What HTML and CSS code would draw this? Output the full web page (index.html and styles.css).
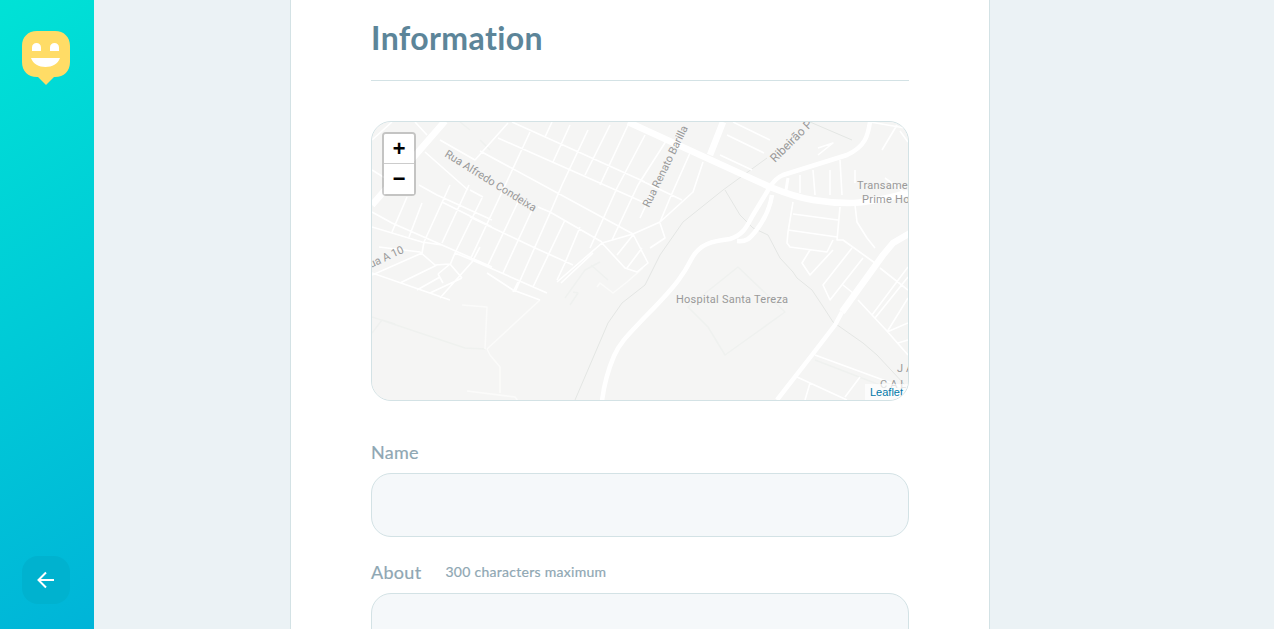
FILE: index.html
```html
<!DOCTYPE html>
<html lang="en">
<head>
<meta charset="utf-8">
<title>Create orphanage</title>
<link rel="stylesheet" href="styles.css">
</head>
<body>
<div class="app">
  <aside class="sidebar">
    <svg class="logo" width="48" height="54" viewBox="0 0 48 54">
      <path class="logo-body" d="M15 0H33C42 0 48 6 48 15V31C48 40 42 46 33 46H32L24 54L16 46H15C6 46 0 40 0 31V15C0 6 6 0 15 0Z"/>
      <path class="logo-face" d="M10 20V16.500C10 13.500 12 12 14.500 12C17 12 19 13.500 19 16.500V20ZM28 20V16.500C28 13.500 30 12 32.500 12C35 12 37 13.500 37 16.500V20ZM9 27H38C36 33 30 36 23.500 36C17 36 11 33 9 27Z"/>
    </svg>
    <button class="back" type="button" aria-label="Back">
      <svg width="24" height="24" viewBox="0 0 24 24"><path d="M20 12H5M12 4.500L4.500 12L12 19.500"/></svg>
    </button>
  </aside>
  <main class="main">
    <form class="card">
      <h1 class="title">Information</h1>
      <div class="map">
        <svg class="tiles" viewBox="371 121 538 280" width="538" height="280">
          <rect class="land" x="371" y="121" width="538" height="280"/>
          <path class="boundary" d="M767 158L723 190L683 222L660 255L645 285L622 303L608 323L575 400M725 190L740 215L753 228L768 235L780 258L793 272L797 278L812 290L822 305L833 322L863 343L877 355L905 385M810 122L852 140"/>
          <path class="faint" d="M738 267L785 312L725 355L708 327L688 307ZM372 317L465 348L485 349M372 333L382 320L395 324M565 298L585 270L600 262M570 305L578 293L573 292M591 265L608 280M815 360L880 385M460 122L470 130M480 140L490 150"/>
          <path class="path" d="M485 349L487 307L462 305M487 349L490 355L500 367L500 393M467 391L515 397L518 401M487 349L540 300M597 287L600 283L613 293L627 282L643 268"/>
          <path class="street" d="M512 122L645 182M498 138L645 203M480 151L633 234M470 190L483 197M538 207L550 212L602 242M470 217L533 247L573 265M419 185L437 195L492 220M442 202L492 227M372 212L392 223L442 245L492 267M372 227L422 242L442 245M425 152L468 190M475 160L508 123M440 140L475 160M415 122L427 135M372 140L392 122M372 170L385 178
          M530 132L502 192L470 260M552 122L545 137M570 125L553 162M588 130L562 185L550 213L515 292M610 125L585 175M628 125L600 185M645 135L617 188L590 248M668 138L638 185L612 240M518 202L488 265M533 208L503 273M565 220L533 287M580 227L565 263L557 280M407 197L392 232M422 203L409 237M450 185L424 242L422 253M469 185L442 243M482 198L455 253L450 265
          M557 282L602 243L633 234L660 222M561 283L593 253M602 243L625 268L637 272L648 263L633 234M617 255L633 235M627 268L642 248M640 218L652 192M640 180L682 200M690 153L670 198L660 222M703 162L693 192L660 222M660 223L665 238L650 248
          M379 247L420 252L435 265L450 264L462 278M440 298L472 262L480 247M372 275L422 253M372 273L450 300M400 283L437 265M417 290L440 277M430 293L462 278M438 274L450 264M438 274L443 283M455 253L472 260L547 293M487 273L513 290L540 300M518 282L513 292
          M727 135L764 153M720 155L752 170M733 122L770 140M793 202L788 232L787 243L790 247L827 252L833 240M793 214L838 220M788 230L837 237M840 207L837 240L843 240L875 263M810 250L802 263L810 275L833 250M852 248L823 285L830 300L863 258M843 285L853 293M855 205L857 222L867 238L875 248M830 170L830 195M813 170L815 195M800 175L800 193M840 160L842 195M855 170L855 183M818 148L833 143L818 155M897 125L882 150M900 131L908 142M870 122L905 128M885 178L908 195
          M880 268L908 290M858 300L886 330L908 355M872 315L908 267M875 318L908 277M887 332L908 298M887 332L908 323M898 343L908 340M815 355L905 388M797 377L847 400M845 397L860 377M810 383L805 400"/>
          <path class="road-m" d="M870 122C868 135 866 146 847 155L783 175C776 178 773 182 770 187L753 215C747 225 745 234 730 239C712 241 700 244 692 258C685 272 678 284 645 317C630 333 620 342 614 356C608 370 604 385 602 401M772 195C770 208 763 222 755 232C750 238 747 242 737 241M842 312L835 325L812 355L777 400"/>
          <path class="road-l" d="M628 122L770 187C785 193 800 198 813 200C825 202 835 203 850 203C870 203 890 197 908 193M723 122L710 155M445 121L372 205M910 233L893 243L883 255L842 312"/>
          <path class="road-s" d="M788 178L786 190"/>
          <text class="label" transform="translate(444 156) rotate(32)">Rua Alfredo Condeixa</text>
          <text class="label" transform="translate(649 208) rotate(-64)">Rua Renato Barilla</text>
          <text class="label big" transform="translate(775 163) rotate(-45)">Ribeirão P</text>
          <text class="label" transform="translate(371 268) rotate(-25)">ua A 10</text>
          <text class="label spaced" x="857" y="189">Transamerica</text>
          <text class="label spaced" x="862" y="203">Prime Hotel</text>
          <text class="label spaced" x="676" y="303">Hospital Santa Tereza</text>
          <text class="label wide" x="897" y="372">JA</text>
          <text class="label wide" x="880" y="388">CAL</text>
        </svg>
        <div class="zoom">
          <a class="zoom-btn zoom-in">+</a>
          <a class="zoom-btn">−</a>
        </div>
        <div class="attribution"><a>Leaflet</a></div>
      </div>
      <div class="field">
        <label class="field-label">Name</label>
        <input class="input" type="text">
      </div>
      <div class="field">
        <label class="field-label field-row"><span>About</span> <span class="hint">300 characters maximum</span></label>
        <textarea class="input textarea"></textarea>
      </div>
    </form>
  </main>
</div>
</body>
</html>
```
FILE: styles.css
```css
* { box-sizing: border-box; }
html, body { margin: 0; height: 100%; overflow: hidden; }
body { background: #ebf2f5; font-family: "Lato", "Noto Sans", sans-serif; color: #5c8599; font-variant-ligatures: none; }
.app { position: relative; height: 100vh; }
.sidebar {
  position: absolute; left: 0; top: 0; bottom: 0;
  width: 94px; display: flex; flex-direction: column; justify-content: space-between; align-items: flex-start;
  padding: 31px 0 25px 22px;
  background: linear-gradient(329.54deg, #00b4d8 0%, #00e2d6 100%);
}
.logo-body { fill: #ffdc66; }
.logo-face { fill: #fff; }
.back {
  width: 48px; height: 48px; border: 0; padding: 0; border-radius: 16px; background: #00b2cf;
  display: flex; align-items: center; justify-content: center;
}
.back path { fill: none; stroke: #fff; stroke-width: 2; }
.main { display: flex; justify-content: center; padding-left: 6px; }
.card {
  width: 700px; flex: none; height: 900px; padding: 0 80px; background: #fff;
  border: 1px solid #d3e2e5; border-width: 0 1px;
}
.title {
  margin: 0 0 40px; padding: 15px 0 20px; height: 81px; line-height: 46px; font-size: 32px; font-weight: 700;
  letter-spacing: .4px; color: #5c8599; border-bottom: 1px solid #d3e2e5;
}
.map {
  position: relative; height: 280px; border: 1px solid #d3e2e5; border-radius: 20px; overflow: hidden; background: #f4f4f3;
}
.tiles { display: block; margin: -1px; }
.land { fill: #f5f5f4; }
.tiles path { fill: none; stroke-linejoin: round; }
.boundary { stroke: #e4e6e4; stroke-width: 1; }
.faint { stroke: #eff1ef; stroke-width: 1.500; }
.path { stroke: #fbfbfa; stroke-width: 1.500; }
.street { stroke: #fff; stroke-width: 1.600; }
.road-m { stroke: #fff; stroke-width: 4.500; }
.road-l { stroke: #fff; stroke-width: 6.500; }
.road-s { stroke: #fff; stroke-width: 3; }
.label { font: 400 11px "Roboto", sans-serif; fill: #999; }
.spaced { letter-spacing: .25px; }
.big { font-size: 12px; }
.wide { letter-spacing: 3px; }
.zoom {
  position: absolute; left: 10px; top: 10px; width: 34px; border: 2px solid rgba(0, 0, 0, .2); border-radius: 4px; background-clip: padding-box;
}
.zoom-btn {
  display: block; height: 30px; width: 30px; background: #fff; color: #000; text-align: center;
  font: 700 22px/34px "Liberation Mono", monospace;
}
.zoom-in { border-bottom: 1px solid #ccc; border-radius: 2px 2px 0 0; }
.attribution {
  position: absolute; right: 0; bottom: 0; padding: 0 5px; height: 16px; background: rgba(255, 255, 255, .7);
  font: 11px/16px "Liberation Sans", sans-serif; color: #0078a8;
}
.field { margin-top: 24px; }
.map + .field { margin-top: 40px; }
.field-label { display: block; height: 24px; margin-bottom: 8px; font-size: 18px; line-height: 22px; letter-spacing: .3px; color: #8fa7b3; -webkit-text-stroke: .2px #8fa7b3; }
.field-row { display: flex; align-items: center; gap: 24px; height: 22px; margin-bottom: 10px; }
.hint { font-size: 14px; letter-spacing: .28px; }
.input {
  display: block; width: 100%; height: 64px; border: 1px solid #d3e2e5; border-radius: 20px; background: #f5f8fa; outline: 0; resize: none;
}
.textarea { height: 120px; }
```
